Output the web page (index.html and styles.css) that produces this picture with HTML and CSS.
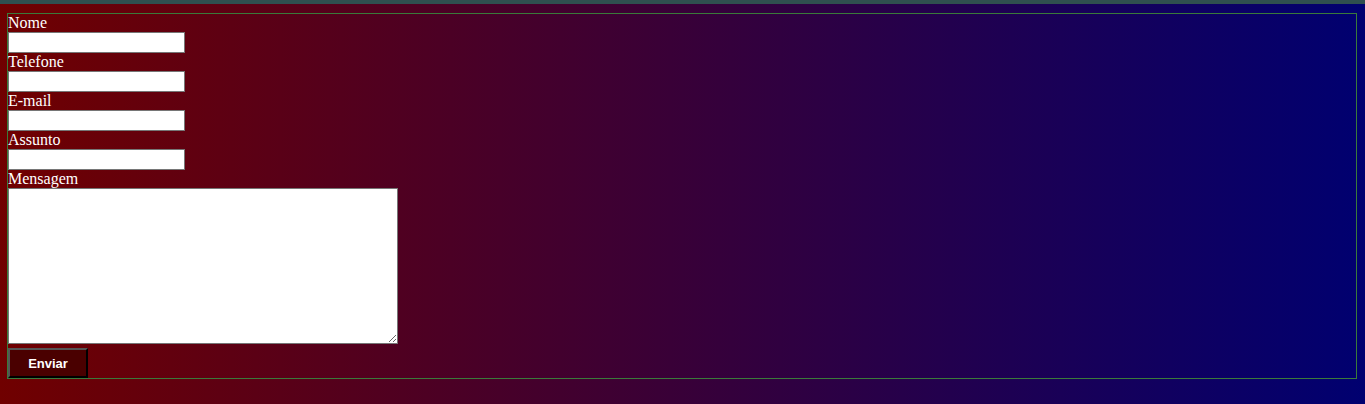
FILE: index.html
```html
<!DOCTYPE html>
<html lang="pt-BR">
<head>
<meta charset="utf-8">
<title>Contato</title>
<link rel="stylesheet" href="styles.css">
</head>
<body>
<div class="topbar"></div>
<main class="page">
  <form class="contact-form">
    <label class="field-label" for="nome">Nome</label>
    <input class="field-input" type="text" id="nome">
    <label class="field-label" for="telefone">Telefone</label>
    <input class="field-input" type="text" id="telefone">
    <label class="field-label" for="email">E-mail</label>
    <input class="field-input" type="text" id="email">
    <label class="field-label" for="assunto">Assunto</label>
    <input class="field-input" type="text" id="assunto">
    <label class="field-label" for="mensagem">Mensagem</label>
    <textarea class="field-textarea" id="mensagem"></textarea>
    <button class="submit-btn" type="button">Enviar</button>
  </form>
</main>
</body>
</html>
```
FILE: styles.css
```css
html, body {
  margin: 0;
  padding: 0;
}
body {
  min-height: 100vh;
  background: linear-gradient(to right, #700000, #000070);
  font-family: "Liberation Serif", "Times New Roman", serif;
  font-size: 16px;
  color: #ffffff;
}
.topbar {
  height: 4px;
  background: #2f4f4f;
}
.page {
  padding: 9px 9px 0 7px;
}
.contact-form {
  box-sizing: border-box;
  width: 1350px;
  border: 1px solid #3a7a3a;
  display: flex;
  flex-direction: column;
  align-items: flex-start;
}
.field-label {
  display: block;
  height: 18px;
  line-height: 18px;
}
.field-input {
  box-sizing: border-box;
  width: 177px;
  height: 21px;
  margin: 0;
  padding: 1px 2px;
  border: 1px solid #767676;
  background: #ffffff;
  font-family: "Liberation Sans", Arial, sans-serif;
  font-size: 13px;
}
.field-textarea {
  box-sizing: border-box;
  width: 390px;
  height: 156px;
  margin: 0 0 4px 0;
  padding: 2px;
  border: 1px solid #767676;
  background: #ffffff;
  font-family: "Liberation Mono", monospace;
  font-size: 13px;
}
.submit-btn {
  box-sizing: border-box;
  width: 80px;
  height: 30px;
  margin: 0;
  padding: 0;
  background: #4a0000;
  color: #ffffff;
  border-style: solid;
  border-width: 2px;
  border-color: #555555 #000000 #000000 #555555;
  font-family: "Liberation Sans", Arial, sans-serif;
  font-weight: bold;
  font-size: 13px;
  cursor: pointer;
}
```
